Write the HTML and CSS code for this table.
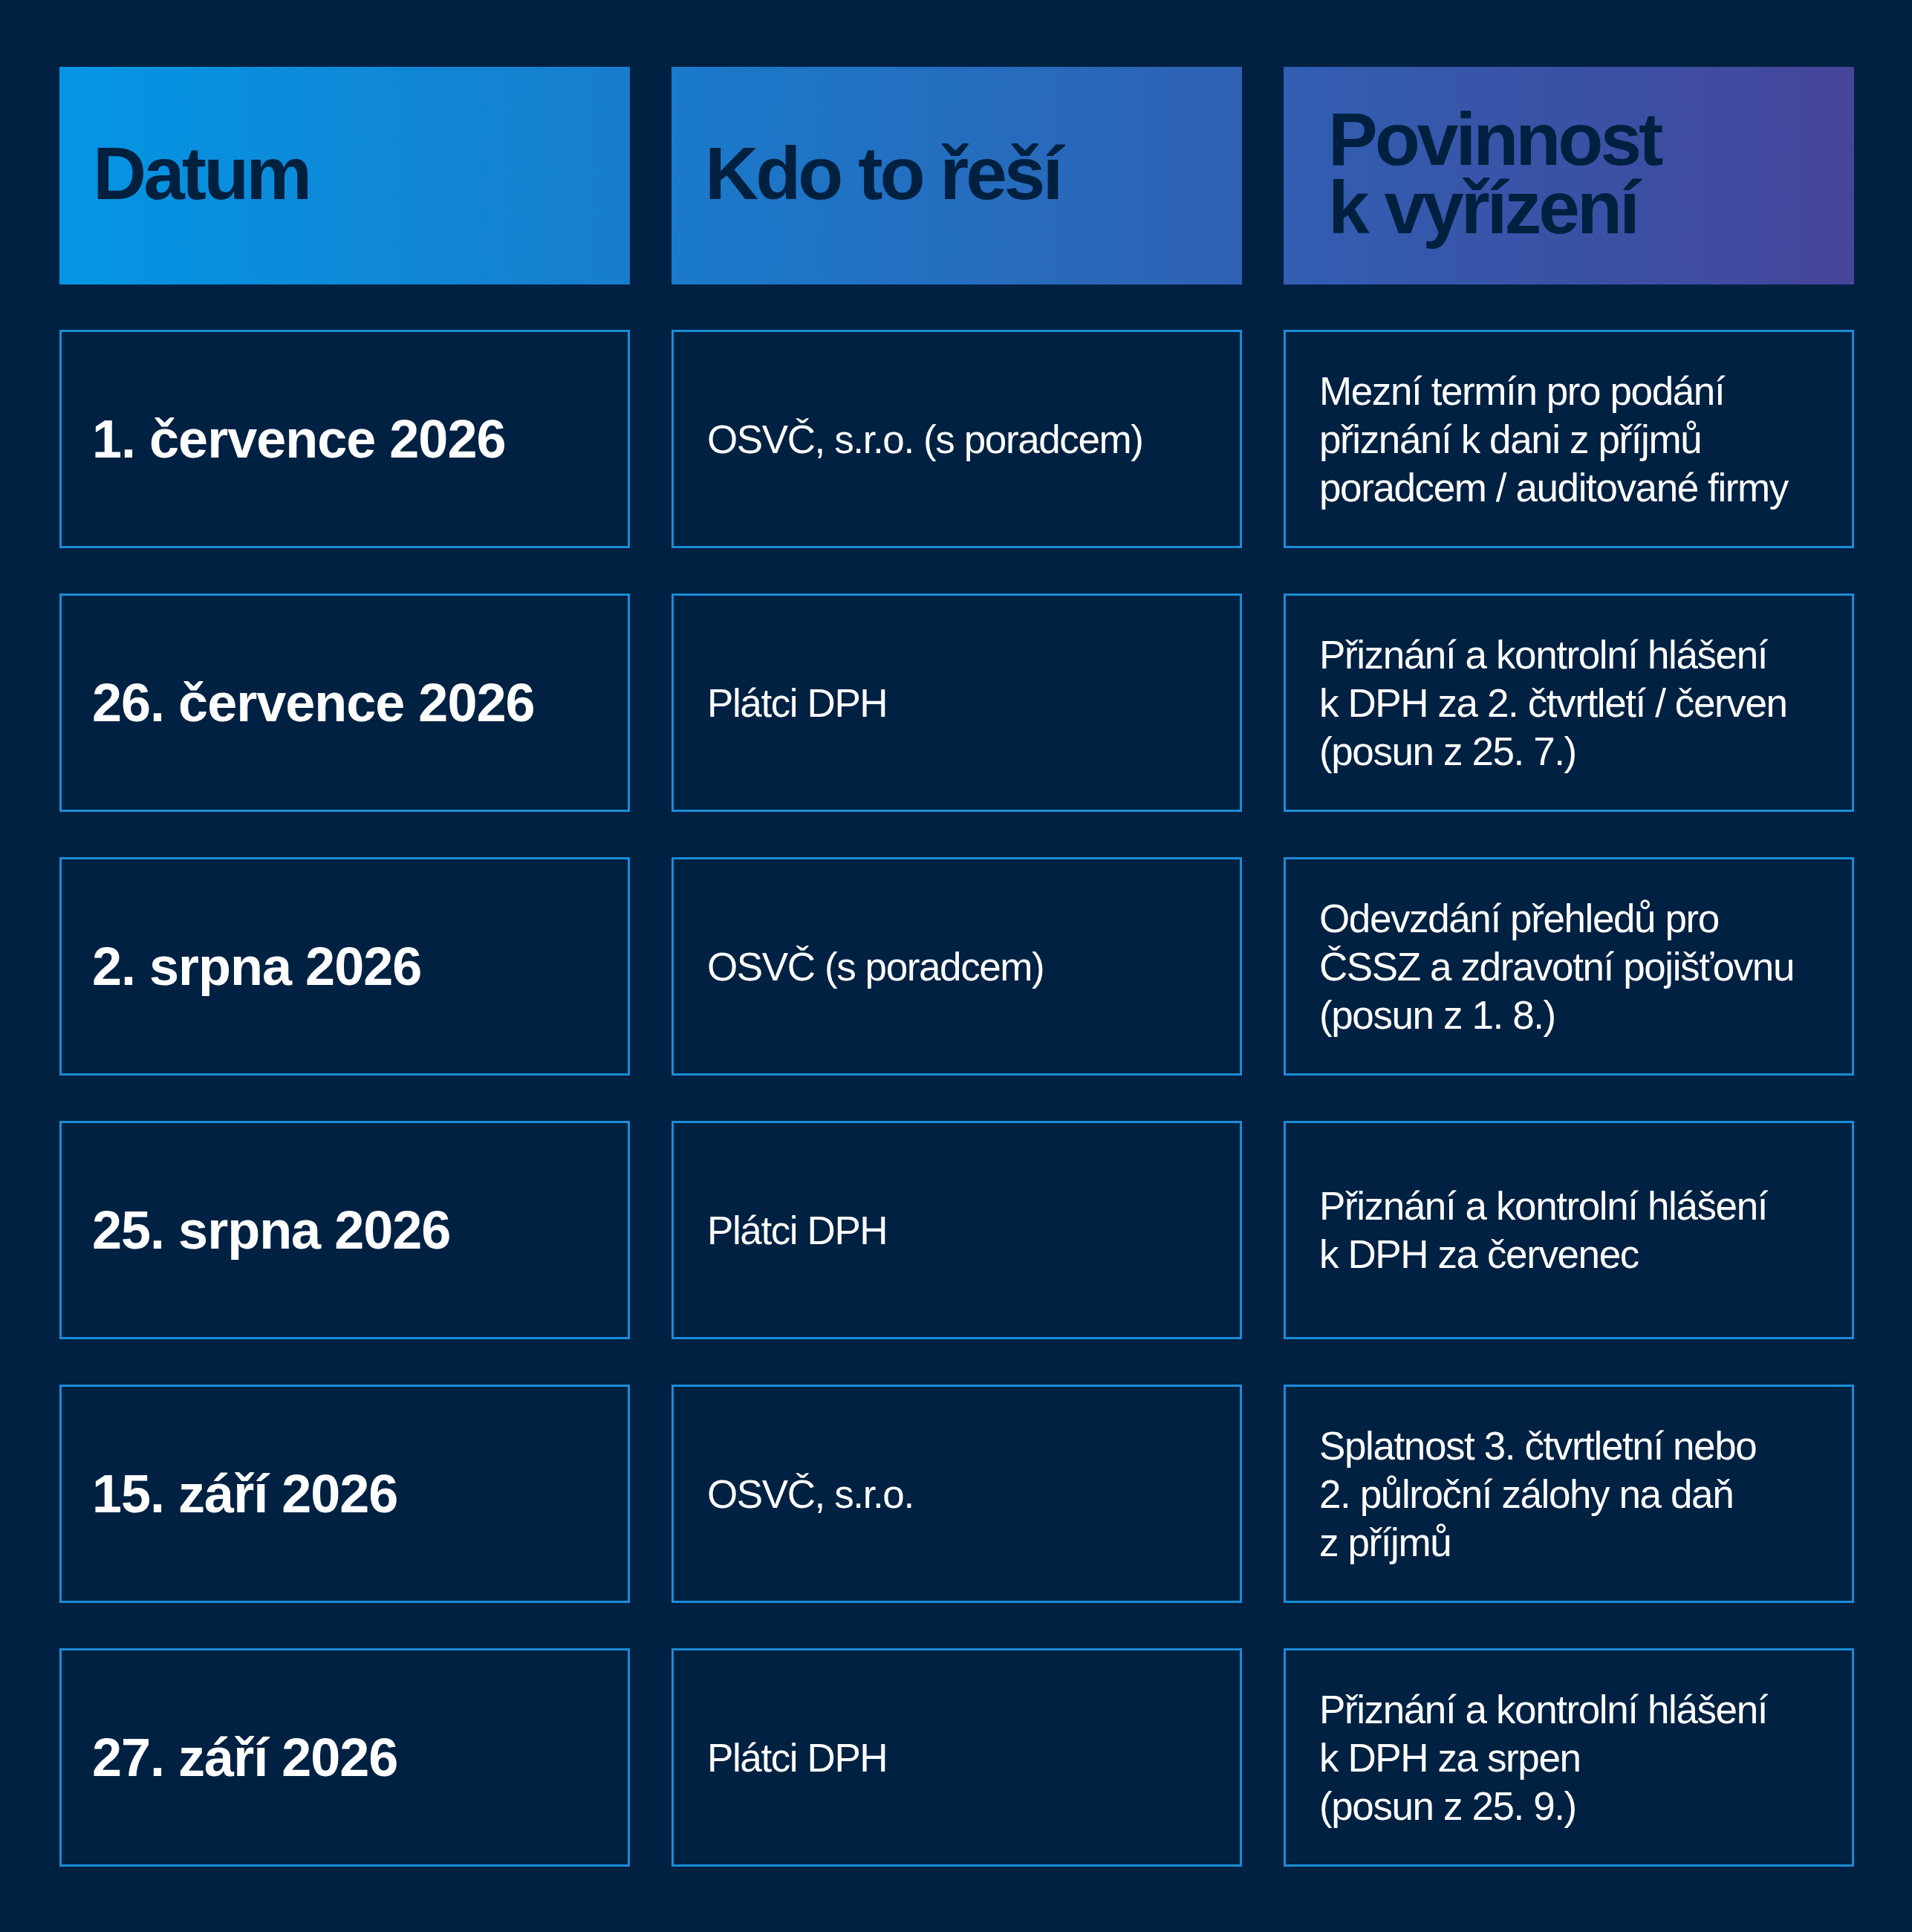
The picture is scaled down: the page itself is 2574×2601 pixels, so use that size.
FILE: index.html
```html
<!DOCTYPE html>
<html lang="cs">
<head>
<meta charset="utf-8">
<title>Termíny</title>
<link rel="stylesheet" href="styles.css">
</head>
<body>
<main class="schedule">
  <div class="head head-1"><h2 class="head-text">Datum</h2></div>
  <div class="head head-2"><h2 class="head-text">Kdo to řeší</h2></div>
  <div class="head head-3"><h2 class="head-text"><span class="head-line">Povinnost</span><span class="head-line">k vyřízení</span></h2></div>

  <div class="cell"><span class="date">1. července 2026</span></div>
  <div class="cell"><span class="text">OSVČ, s.r.o. (s poradcem)</span></div>
  <div class="cell"><span class="text">Mezní termín pro podání<br>přiznání k dani z příjmů<br>poradcem / auditované firmy</span></div>

  <div class="cell"><span class="date">26. července 2026</span></div>
  <div class="cell"><span class="text">Plátci DPH</span></div>
  <div class="cell"><span class="text">Přiznání a kontrolní hlášení<br>k DPH za 2. čtvrtletí / červen<br>(posun z 25. 7.)</span></div>

  <div class="cell"><span class="date">2. srpna 2026</span></div>
  <div class="cell"><span class="text">OSVČ (s poradcem)</span></div>
  <div class="cell"><span class="text">Odevzdání přehledů pro<br>ČSSZ a zdravotní pojišťovnu<br>(posun z 1. 8.)</span></div>

  <div class="cell"><span class="date">25. srpna 2026</span></div>
  <div class="cell"><span class="text">Plátci DPH</span></div>
  <div class="cell"><span class="text">Přiznání a kontrolní hlášení<br>k DPH za červenec</span></div>

  <div class="cell"><span class="date">15. září 2026</span></div>
  <div class="cell"><span class="text">OSVČ, s.r.o.</span></div>
  <div class="cell"><span class="text">Splatnost 3. čtvrtletní nebo<br>2. půlroční zálohy na daň<br>z příjmů</span></div>

  <div class="cell"><span class="date">27. září 2026</span></div>
  <div class="cell"><span class="text">Plátci DPH</span></div>
  <div class="cell"><span class="text">Přiznání a kontrolní hlášení<br>k DPH za srpen<br>(posun z 25. 9.)</span></div>
</main>
</body>
</html>
```
FILE: styles.css
```css
html, body {
  margin: 0;
  padding: 0;
  background: #012142;
}

body {
  font-family: "Liberation Sans", Arial, sans-serif;
  color: #ffffff;
}

.schedule {
  box-sizing: border-box;
  width: 2574px;
  height: 2601px;
  padding: 90px 78px 88px 80px;
  display: grid;
  grid-template-columns: 768px 768px 768px;
  grid-template-rows: 293px repeat(6, 294px);
  column-gap: 56px;
  row-gap: 61px;
}

.head {
  display: flex;
  align-items: center;
  padding-left: 45px;
  padding-bottom: 8px;
  box-sizing: border-box;
}

.head-1 {
  background: linear-gradient(90deg, #0396e4 0%, #187dcd 100%);
}

.head-2 {
  background: linear-gradient(90deg, #1a7acb 0%, #2f61b3 100%);
}

.head-3 {
  background: linear-gradient(90deg, #305eb1 0%, #45459a 100%);
  padding-left: 60px;
}

.head-text {
  margin: 0;
  font-size: 100px;
  font-weight: 700;
  letter-spacing: -4px;
  line-height: 92px;
  color: #00203f;
}

.head-line {
  display: block;
}

.cell {
  box-sizing: border-box;
  border: 3px solid #1b8cd8;
  display: flex;
  align-items: center;
  padding-left: 45px;
}

.date {
  margin-left: -4px;
  font-size: 72px;
  font-weight: 700;
  letter-spacing: -1px;
  line-height: 80px;
}

.text {
  font-size: 53px;
  font-weight: 400;
  letter-spacing: -1.4px;
  line-height: 65px;
}
```
